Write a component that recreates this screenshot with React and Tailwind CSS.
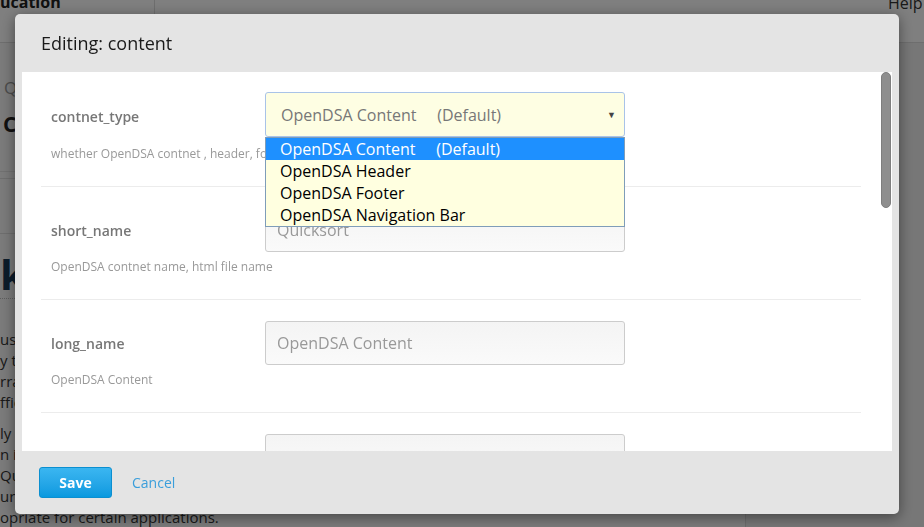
import { useState } from 'react';

const OPTIONS = [
  'OpenDSA Content     (Default)',
  'OpenDSA Header',
  'OpenDSA Footer',
  'OpenDSA Navigation Bar',
];

function BackgroundPage() {
  return (
    <div className="flex h-full flex-col">
      {/* top nav */}
      <div className="flex h-[43px] shrink-0 border-b border-[#dddddd] bg-white">
        <div className="h-full w-[155px] overflow-hidden border-r border-[#dddddd]">
          <div className="-mt-[9px] whitespace-nowrap text-[16px] font-bold leading-[22px] text-[#222]">
            ucation
          </div>
        </div>
        <div className="flex-1" />
        <div className="w-[36px] overflow-hidden">
          <div className="-mt-[8px] whitespace-nowrap text-[16px] leading-[22px] text-[#333]">
            Help
          </div>
        </div>
      </div>

      <div className="flex flex-1">
        <div className="w-[746px] overflow-hidden border-r border-[#d8d8d8] bg-[#f6f6f6]">
          <div className="whitespace-nowrap pl-[4px] pt-[33px] text-[17px] leading-[23px] text-[#999]">
            Quicksort
          </div>
          <div className="mt-[11px] whitespace-nowrap pl-[3px] text-[21px] font-bold leading-[28px] text-[#222]">
            Chapter
          </div>
          <div className="mt-[33px] border-t border-[#e2e2e2] pt-[6px]">
            <div className="h-[56px] border-y border-[#dddddd]" />
          </div>
          <div className="mt-[15px] h-[50px] whitespace-nowrap border-b border-dotted border-[#bbb] text-[42px] font-bold leading-[50px] text-[#183856]">
            ksort
          </div>
          <div className="mt-[30px] whitespace-nowrap text-[15px] leading-[21px] text-[#333]">
            <div>us Hoare, Quicksort is aptly named</div>
            <div>y the fastest known general-purpose</div>
            <div>rrays in memory</div>
            <div>fficient in the average case</div>
          </div>
          <div className="mt-[10px] whitespace-nowrap text-[15px] leading-[21px] text-[#333]">
            <div>ly slow when</div>
            <div>n its worst case</div>
            <div>Quicksort is</div>
            <div>ur cost is</div>
            <div>opriate for certain applications.</div>
          </div>
        </div>
        <div className="flex-1 bg-[#eeeeee]" />
      </div>
    </div>
  );
}

function FieldRow({ label, help, value }) {
  return (
    <div className="border-b border-[#ececec] pb-[24px] pl-[10px] pt-[21px]">
      <div className="flex">
        <div className="flex h-[44px] w-[214px] items-center text-[14px] font-semibold text-[#777]">
          {label}
        </div>
        <div className="flex h-[44px] w-[360px] items-center rounded-[3px] border border-[#cccccc] bg-linear-to-b from-[#f4f4f4] to-[#fafafa] pl-[11px] text-[16px] text-[#999]">
          {value}
        </div>
      </div>
      <div className="mt-[6px] whitespace-nowrap text-[12px] leading-[17px] text-[#999]">
        {help}
      </div>
    </div>
  );
}

function EditModal() {
  const [selected] = useState(0);

  return (
    <div className="fixed left-[15px] top-[14px] flex h-[500px] w-[884px] flex-col rounded-[5px] bg-[#e4e4e4] shadow-[0_3px_14px_rgba(0,0,0,0.45)]">
      <div className="flex h-[58px] shrink-0 items-center pl-[26px] text-[18px] text-[#1a1a1a]">
        Editing: content
      </div>

      <div className="mx-[7px] flex min-h-0 flex-1 bg-white">
        <div className="flex-1 overflow-hidden pl-[19px] pr-[20px]">
          {/* contnet_type row with the open select */}
          <div className="border-b border-[#ececec] pb-[24px] pl-[10px] pt-[20px]">
            <div className="flex">
              <div className="flex h-[45px] w-[214px] items-center pt-[4px] text-[14px] font-semibold text-[#777]">
                contnet_type
              </div>
              <div className="relative w-[360px]">
                <div className="flex h-[45px] items-center justify-between rounded-[3px] border border-[#a9c3e8] bg-[#fefee3] pl-[15px] pr-[8px] text-[16px] text-[#777]">
                  <span className="whitespace-pre">{OPTIONS[0]}</span>
                  <span className="text-[9px] text-[#444]">▼</span>
                </div>
                <div className="absolute left-0 top-full z-10 w-full border border-[#7f9db9] bg-[#ffffe0]">
                  {OPTIONS.map((opt, i) => (
                    <div
                      key={opt}
                      className={`whitespace-pre pl-[14px] text-[16px] leading-[22px] ${
                        i === selected ? 'bg-[#1e90ff] text-white' : 'text-black'
                      }`}
                    >
                      {opt}
                    </div>
                  ))}
                </div>
              </div>
            </div>
            <div className="mt-[8px] whitespace-nowrap text-[12px] leading-[17px] text-[#999]">
              whether OpenDSA contnet , header, footer or navigation bar
            </div>
          </div>

          <FieldRow label="short_name" value="Quicksort" help="OpenDSA contnet name, html file name" />
          <FieldRow label="long_name" value="OpenDSA Content" help="OpenDSA Content" />
          <FieldRow label="description" value="" help="" />
        </div>

        {/* scrollbar */}
        <div className="w-[11px] shrink-0">
          <div className="h-[136px] w-[10px] rounded-full border border-[#7e7e7e] bg-[#8e8e8e]" />
        </div>
      </div>

      <div className="flex h-[63px] shrink-0 items-center gap-5 pl-[24px]">
        <button className="h-[31px] w-[73px] rounded-[3px] border border-[#0b8fd0] bg-linear-to-b from-[#3ab6f1] to-[#0799df] text-[14px] font-bold text-white">
          Save
        </button>
        <button className="text-[14px] text-[#3a9edb]">Cancel</button>
      </div>
    </div>
  );
}

export default function App() {
  return (
    <div className="relative h-[527px] w-[924px] overflow-hidden bg-[#eeeeee] font-['Open_Sans',sans-serif]">
      <BackgroundPage />
      <div className="fixed inset-0 bg-black/50" />
      <EditModal />
    </div>
  );
}
